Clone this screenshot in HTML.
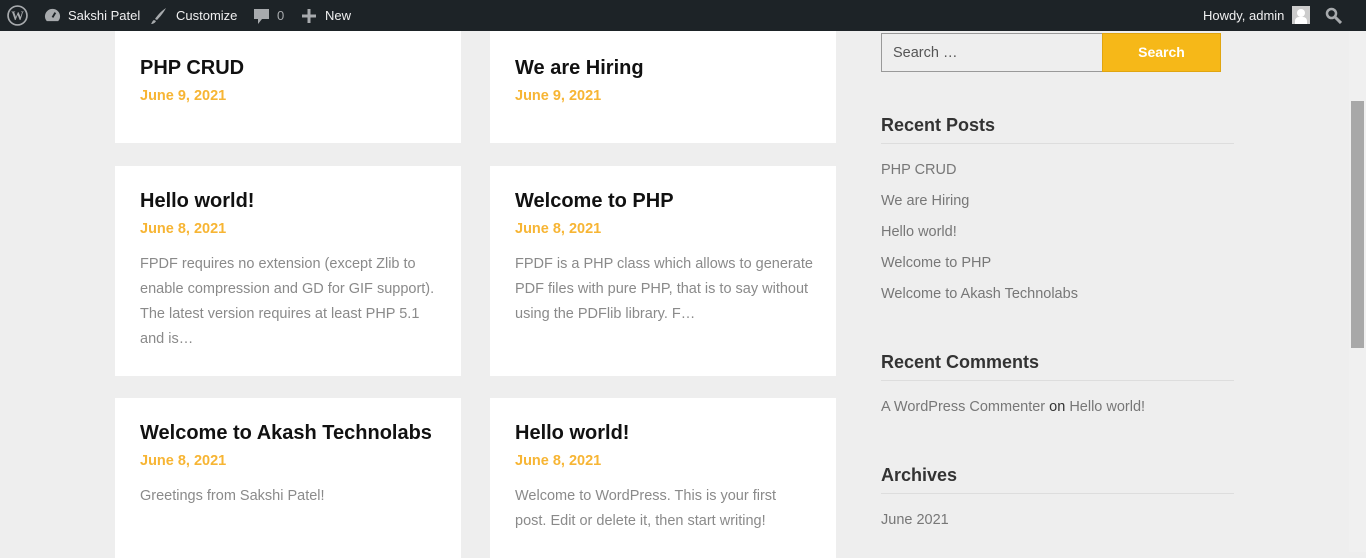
<!DOCTYPE html>
<html><head><meta charset="utf-8"><style>
*{margin:0;padding:0;box-sizing:border-box}
body{width:1366px;height:552px;overflow:hidden;background:#eee;font-family:"Liberation Sans",sans-serif;position:relative}
#bar{position:absolute;left:0;top:0;width:1366px;height:31px;background:#1d2327;color:#f0f0f1;font-size:13px}
#bar span{position:absolute;top:8px}
.card{position:absolute;background:#fff;width:346px}
.card h2{position:absolute;left:25px;font-size:20px;font-weight:bold;color:#111}
.card .d{position:absolute;left:25px;font-size:14.5px;color:#f7b534;font-weight:bold}
.card p{position:absolute;left:25px;width:296px;font-size:14.5px;line-height:25px;color:#8a8a8a}
.sb{position:absolute;left:881px}
.sb h3{font-size:18px;color:#333;font-weight:bold}
.ln{position:absolute;left:881px;width:353px;height:1px;background:#ddd}
.lk{position:absolute;left:881px;font-size:14.5px;color:#777}
</style></head><body>
<div id="bar">
<svg style="position:absolute;left:7px;top:5px" width="21" height="21" viewBox="0 0 20 20"><circle cx="10" cy="10" r="9" fill="none" stroke="#a7aaad" stroke-width="1.6"/><text x="10" y="14.5" font-size="12" font-weight="bold" text-anchor="middle" fill="#a7aaad" font-family="Liberation Serif">W</text></svg>
<svg style="position:absolute;left:43px;top:7px" width="19" height="17" viewBox="0 0 20 18"><path d="M10 2a8 8 0 0 0-8 8 8 8 0 0 0 2 5h12a8 8 0 0 0 2-5 8 8 0 0 0-8-8z" fill="#a7aaad"/><path d="M10 11l3-5" stroke="#1d2327" stroke-width="2"/></svg>
<span style="left:68px">Sakshi Patel</span>
<svg style="position:absolute;left:151px;top:7px" width="16" height="17" viewBox="0 0 16 17"><path d="M15 1C10 4 6 9 4 12l2 1C9 10 13 5 15 1zM3 13c-2 1-2 3-3 4 2 0 4-1 5-3z" fill="#a7aaad"/></svg>
<span style="left:176px">Customize</span>
<svg style="position:absolute;left:253px;top:8px" width="17" height="17" viewBox="0 0 17 17"><path d="M1 1h15v10H9l-4 5v-5H1z" fill="#a7aaad"/></svg>
<span style="left:277px;color:#a7aaad">0</span>
<svg style="position:absolute;left:302px;top:9px" width="14" height="14"><path d="M7 0v14M0 7h14" stroke="#a7aaad" stroke-width="3"/></svg>
<span style="left:325px">New</span>
<span style="left:1203px">Howdy, admin</span>
<div style="position:absolute;left:1292px;top:6px;width:18px;height:18px;background:#ccc"><div style="position:absolute;left:5px;top:3px;width:8px;height:8px;border-radius:50%;background:#fff"></div><div style="position:absolute;left:3px;top:11px;width:12px;height:7px;background:#fff;border-radius:4px 4px 0 0"></div></div>
<svg style="position:absolute;left:1325px;top:7px" width="17" height="17" viewBox="0 0 17 17"><circle cx="6.5" cy="6.5" r="4.5" fill="none" stroke="#a7aaad" stroke-width="2.5"/><path d="M10 10l6 6" stroke="#a7aaad" stroke-width="3"/></svg>
</div>
<div style="position:absolute;left:1349px;top:31px;width:17px;height:521px;background:#f0f0f0"></div>
<div style="position:absolute;left:1351px;top:101px;width:13px;height:247px;background:#a8a8a8"></div>

<div class="card" style="left:115px;top:31px;height:112px"><h2 style="top:26px">PHP CRUD</h2><div class="d" style="top:57px">June 9, 2021</div></div>
<div class="card" style="left:490px;top:31px;height:112px"><h2 style="top:26px">We are Hiring</h2><div class="d" style="top:57px">June 9, 2021</div></div>
<div class="card" style="left:115px;top:166px;height:210px"><h2 style="top:24px">Hello world!</h2><div class="d" style="top:55px">June 8, 2021</div><p style="top:86px">FPDF requires no extension (except Zlib to enable compression and GD for GIF support). The latest version requires at least PHP 5.1 and is…</p></div>
<div class="card" style="left:490px;top:166px;height:210px"><h2 style="top:24px">Welcome to PHP</h2><div class="d" style="top:55px">June 8, 2021</div><p style="top:86px;width:300px">FPDF is a PHP class which allows to generate PDF files with pure PHP, that is to say without using the PDFlib library. F…</p></div>
<div class="card" style="left:115px;top:398px;height:160px"><h2 style="top:24px">Welcome to Akash Technolabs</h2><div class="d" style="top:55px">June 8, 2021</div><p style="top:86px">Greetings from Sakshi Patel!</p></div>
<div class="card" style="left:490px;top:398px;height:160px"><h2 style="top:24px">Hello world!</h2><div class="d" style="top:55px">June 8, 2021</div><p style="top:86px;width:275px">Welcome to WordPress. This is your first post. Edit or delete it, then start writing!</p></div>

<div style="position:absolute;left:881px;top:33px;width:222px;height:39px;border:1px solid #999;background:#eee;font-size:14.5px;color:#555;padding:11px 11px">Search …</div>
<div style="position:absolute;left:1102px;top:33px;width:119px;height:39px;background:#f6b818;border:1px solid #e0a510;color:#fff;font-weight:bold;font-size:14px;text-align:center;line-height:37px">Search</div>

<div class="sb" style="top:115px"><h3>Recent Posts</h3></div>
<div class="ln" style="top:143px"></div>
<div class="lk" style="top:162px">PHP CRUD</div>
<div class="lk" style="top:193px">We are Hiring</div>
<div class="lk" style="top:224px">Hello world!</div>
<div class="lk" style="top:255px">Welcome to PHP</div>
<div class="lk" style="top:286px">Welcome to Akash Technolabs</div>
<div class="sb" style="top:352px"><h3>Recent Comments</h3></div>
<div class="ln" style="top:380px"></div>
<div class="lk" style="top:399px">A WordPress Commenter <span style="color:#333">on</span> Hello world!</div>
<div class="sb" style="top:465px"><h3>Archives</h3></div>
<div class="ln" style="top:493px"></div>
<div class="lk" style="top:512px">June 2021</div>
</body></html>
